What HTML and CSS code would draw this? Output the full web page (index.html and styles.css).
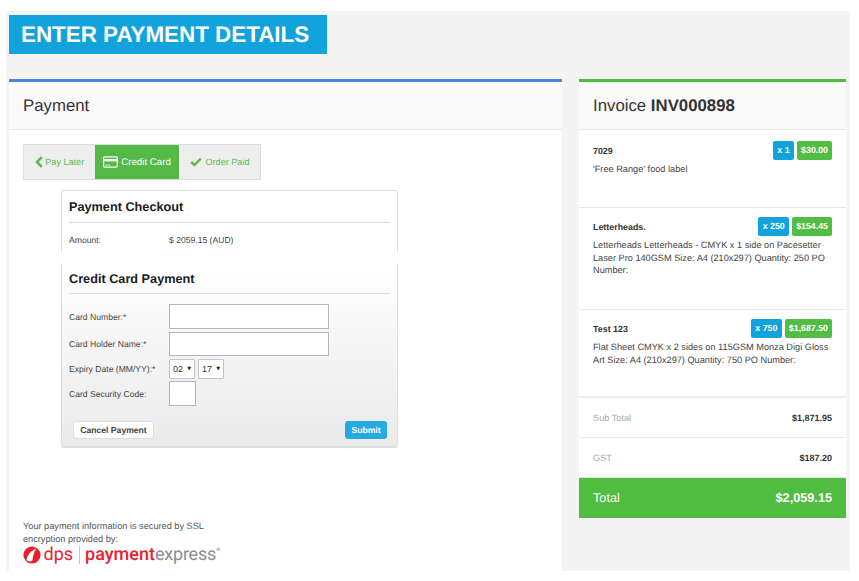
FILE: index.html
```html
<!DOCTYPE html>
<html lang="en">
<head>
<meta charset="utf-8">
<title>Enter Payment Details</title>
<link rel="stylesheet" href="styles.css">
</head>
<body>
<div class="page">
  <h1 class="banner">ENTER PAYMENT DETAILS</h1>
  <div class="columns">
    <section class="panel payment">
      <h2 class="panel-head">Payment</h2>
      <div class="payment-body">
        <nav class="tabs">
          <a class="tab tab-later"><svg class="ico" width="8" height="12" viewBox="0 0 8 12"><path d="M6.8 1.2 2 6l4.8 4.8" fill="none" stroke="currentColor" stroke-width="2.6"/></svg>Pay Later</a>
          <a class="tab tab-card active"><svg class="ico" width="15" height="12" viewBox="0 0 15 12"><rect x=".6" y=".8" width="13.8" height="10.4" rx="1.2" fill="none" stroke="currentColor" stroke-width="1.2"/><rect x="1" y="3" width="13" height="2.4" fill="currentColor"/><path d="M2.5 9h2M5.5 9h1.5" stroke="currentColor"/></svg>Credit Card</a>
          <a class="tab tab-paid"><svg class="ico" width="12" height="10" viewBox="0 0 12 10"><path d="M1.2 5 4.4 8 10.8 1.6" fill="none" stroke="currentColor" stroke-width="2.4"/></svg>Order Paid</a>
        </nav>
        <div class="box box-checkout">
          <h3 class="box-title">Payment Checkout</h3>
          <div class="row amount"><span class="label">Amount:</span><span>$ 2059.15 (AUD)</span></div>
        </div>
        <form class="box box-card">
          <h3 class="box-title">Credit Card Payment</h3>
          <div class="row r-number"><label class="label">Card Number:*</label><input class="field field-wide" type="text"></div>
          <div class="row r-name"><label class="label">Card Holder Name:*</label><input class="field field-wide" type="text"></div>
          <div class="row r-expiry"><label class="label">Expiry Date (MM/YY):*</label>
            <span class="pick-wrap"><select class="pick"><option>02</option></select></span>
            <span class="pick-wrap"><select class="pick"><option>17</option></select></span>
          </div>
          <div class="row r-cvc"><label class="label">Card Security Code:</label><input class="field field-cvc" type="text"></div>
          <div class="actions">
            <button class="btn btn-cancel" type="button">Cancel Payment</button>
            <button class="btn btn-submit" type="button">Submit</button>
          </div>
        </form>
        <div class="secure">
          <p>Your payment information is secured by SSL encryption provided by:</p>
          <div class="logo">
            <svg width="18" height="18" viewBox="0 0 18 18"><circle cx="9" cy="9" r="8.6" fill="#e8202e"/><path d="M3.6 14C4 9.4 7.4 4.8 13.4 2.4 11 5.6 10 9.2 9.4 14.8 7.4 15.8 5 15.4 3.6 14Z" fill="#fff"/></svg>
            <span class="logo-dps">dps</span><span class="logo-sep"></span><span class="logo-pay">payment</span><span class="logo-exp">express</span><sup class="logo-reg">®</sup>
          </div>
        </div>
      </div>
    </section>
    <aside class="panel invoice">
      <h2 class="panel-head">Invoice <b>INV000898</b></h2>
      <div class="item item-1">
        <div class="item-top"><b>7029</b><span class="badges"><span class="badge blue">x 1</span><span class="badge green">$30.00</span></span></div>
        <p>'Free Range' food label</p>
      </div>
      <div class="item item-2">
        <div class="item-top"><b>Letterheads.</b><span class="badges"><span class="badge blue">x 250</span><span class="badge green">$154.45</span></span></div>
        <p>Letterheads Letterheads - CMYK x 1 side on Pacesetter Laser Pro 140GSM Size: A4 (210x297) Quantity: 250 PO Number:</p>
      </div>
      <div class="item item-3">
        <div class="item-top"><b>Test 123</b><span class="badges"><span class="badge blue">x 750</span><span class="badge green">$1,687.50</span></span></div>
        <p>Flat Sheet CMYK x 2 sides on 115GSM Monza Digi Gloss Art Size: A4 (210x297) Quantity: 750 PO Number:</p>
      </div>
      <div class="sum"><span>Sub Total</span><b>$1,871.95</b></div>
      <div class="sum"><span>GST</span><b>$187.20</b></div>
      <div class="total"><span>Total</span><b>$2,059.15</b></div>
    </aside>
  </div>
</div>
</body>
</html>
```
FILE: styles.css
```css
* { box-sizing: border-box; }
html, body { margin: 0; padding: 0; background: #fff; }
body { font-family: "Liberation Sans", Arial, sans-serif; color: #333; height: 581px; overflow: hidden; text-rendering: geometricPrecision; }
.page { margin: 11px 9px 0 6px; height: 560px; background: #f4f4f4; padding: 4px 4px 0 3px; overflow: hidden; }
.banner { margin: 0; width: 318px; height: 39px; background: #12a3dd; color: #fff; font-size: 22.4px; line-height: 40px; font-weight: 700; padding-left: 12px; white-space: nowrap; }
.columns { display: flex; gap: 17px; margin-top: 25px; align-items: flex-start; }
.panel { background: #fff; }
.payment { width: 553px; height: 492px; border-top: 3px solid #4a88dc; }
.invoice { width: 267px; border-top: 3px solid #4dbd3f; }
.panel-head { margin: 0; height: 48px; background: #fafafa; border-bottom: 1px solid #e8e8e8; font-weight: 400; color: #333; padding-left: 14px; font-size: 16.8px; line-height: 48px; }
.payment-body { padding: 14px 14px 0; }
.tabs { display: flex; width: 238px; height: 36px; background: #eee; border: 1px solid #ddd; }
.tab { display: flex; align-items: center; justify-content: center; gap: 2.5px; font-size: 9.1px; color: #5dbb4e; }
.tab-later { width: 71px; }
.tab-card { width: 84px; gap: 3px; font-size: 9.7px; }
.tab-paid { width: 81px; gap: 4px; }
.tab.active { background: #55b947; color: #fff; }
.ico { flex: none; }
.box { margin-left: 38px; width: 337px; border: 1px solid #ddd; border-radius: 3px; padding: 0 7px; }
.box-checkout { height: 62px; margin-top: 10px; background: #fff; border-bottom: 0; border-radius: 3px 3px 0 0; }
.box-card { height: 184px; margin-top: 11px; background: linear-gradient(#fff, #eaeaea); border-top: 0; border-radius: 0 0 3px 3px; box-shadow: 0 1px 1px #ddd; }
.box-title { margin: 0; height: 32px; font-size: 12.7px; line-height: 32px; color: #1c1c1c; border-bottom: 1px solid #ddd; }
.box-card .box-title { height: 31px; margin-bottom: 10px; }
.row { display: flex; align-items: center; font-size: 8.6px; color: #444; }
.label { flex: none; width: 100px; }
.amount { height: 34px; }
.r-number { height: 25px; margin-bottom: 3px; }
.r-name { height: 24px; margin-bottom: 3px; }
.r-expiry { height: 20px; margin-bottom: 2px; gap: 3px; }
.r-expiry .label { margin-right: -3px; }
.r-cvc { height: 25px; }
.field { height: 100%; background: #fff; border: 1px solid #b5b5b5; border-radius: 0; padding: 0; margin: 0; }
.field-wide { width: 160px; }
.field-cvc { width: 27px; }
.pick-wrap { position: relative; display: block; width: 26px; height: 20px; }
.pick-wrap::after { content: "▼"; position: absolute; right: 4px; top: 6px; font-size: 5px; line-height: 8px; color: #222; font-family: "DejaVu Sans", sans-serif; pointer-events: none; }
.pick { display: block; width: 26px; height: 20px; font-family: inherit; font-size: 9px; color: #333; background: #fff; border: 1px solid #c4c4c4; border-radius: 1px; padding: 0 0 0 3px; appearance: none; -webkit-appearance: none; }
.actions { display: flex; justify-content: space-between; padding: 15px 3px 0 4px; }
.btn { height: 18px; font-family: inherit; font-size: 8.6px; font-weight: 700; border-radius: 3px; padding: 0; text-rendering: geometricPrecision; }
.btn-cancel { width: 81px; background: #fff; color: #444; border: 1px solid #ddd; }
.btn-submit { width: 42px; background: #27aae1; color: #fff; border: 0; }
.secure { margin-top: 73px; width: 190px; font-size: 9.2px; color: #555; }
.secure p { margin: 0; line-height: 12.7px; }
.logo { display: flex; align-items: center; height: 19px; width: 200px; font-family: Roboto, sans-serif; font-size: 18px; line-height: 19px; white-space: nowrap; }
.logo svg { flex: none; }
.logo-dps { color: #e8202e; margin-left: 2.5px; }
.logo-sep { width: 1px; height: 18px; background: #f3b0b4; margin: 0 5.5px; flex: none; }
.logo-pay { color: #e8202e; font-weight: 500; }
.logo-exp { color: #8d8d8d; letter-spacing: -.2px; }
.logo-reg { font-size: 5px; line-height: 5px; color: #888; align-self: flex-start; margin-top: 3px; }
.item { padding: 9px 14px 0; border-bottom: 1px solid #e8e8e8; font-size: 9.2px; color: #444; }
.item-1 { height: 78px; padding-top: 11px; }
.item-2 { height: 102px; }
.item-3 { height: 88px; border-bottom: 2px solid #eee; }
.item-top { display: flex; justify-content: space-between; height: 19px; align-items: center; }
.item-top b { color: #333; font-size: 8.9px; }
.item p { margin: 3px 0 0; line-height: 12.7px; }
.badges { display: flex; gap: 3px; }
.badge { height: 19px; line-height: 19px; padding: 0 4px; border-radius: 2px; color: #fff; font-weight: 700; font-size: 8.8px; }
.blue { background: #12a3dd; padding: 0 4.5px; }
.green { background: #52bd44; }
.sum { height: 40px; display: flex; justify-content: space-between; align-items: center; padding: 0 14px; font-size: 9.2px; border-bottom: 1px solid #e8e8e8; }
.sum span { color: #aaa; }
.sum b { color: #333; font-size: 9px; }
.total { height: 40px; display: flex; justify-content: space-between; align-items: center; padding: 0 14px; background: #50bd41; color: #fff; font-size: 12.7px; }
```
